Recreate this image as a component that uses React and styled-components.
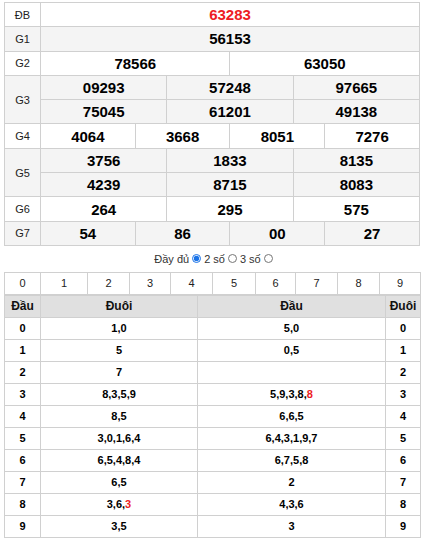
import React from "react";
import styled, { createGlobalStyle } from "styled-components";

const GlobalStyle = createGlobalStyle`
  html, body {
    margin: 0;
    padding: 0;
    background: #fff;
    font-family: "Liberation Sans", Arial, sans-serif;
    color: #000;
  }
`;

const Page = styled.div`
  width: 416px;
  padding: 2px 6px 0 4px;
`;

const PrizeTable = styled.table`
  width: 100%;
  table-layout: fixed;
  border-collapse: collapse;
  td {
    border: 1px solid #d0d0d0;
    text-align: center;
    padding: 0;
  }
`;

const PrizeRow = styled.tr`
  height: 24.3px;
  background: ${(p) => (p.$shade ? "#f4f4f4" : "#fff")};
`;

const Label = styled.td`
  font-size: 11px;
  color: #222;
`;

const Num = styled.td`
  font-size: 15px;
  font-weight: bold;
  color: ${(p) => (p.$red ? "#ed1c24" : "#000")};
`;

const Options = styled.div`
  height: 26px;
  display: flex;
  align-items: center;
  justify-content: center;
  gap: 2px;
  font-size: 11px;
  color: #333;
  padding-left: 4px;
`;

const Radio = styled.input`
  width: 9px;
  height: 9px;
  margin: 0 1px;
  accent-color: #1a73e8;
`;

const DigitTable = styled.table`
  width: 100%;
  border-collapse: collapse;
  table-layout: fixed;
  td {
    border: 1px solid #d0d0d0;
    height: 21px;
    padding: 0;
    text-align: center;
    font-size: 11px;
    color: #222;
  }
`;

const LotoTable = styled.table`
  width: 100%;
  border-collapse: collapse;
  table-layout: fixed;
  td, th {
    border: 1px solid #d0d0d0;
    padding: 0;
    text-align: center;
    font-size: 11px;
    font-weight: bold;
  }
`;

const HeadRow = styled.tr`
  height: 22px;
  background: #e0e0e0;
  th {
    font-size: 12px;
    color: #111;
  }
`;

const BodyRow = styled.tr`
  height: 22px;
`;

const Red = styled.span`
  color: #ed1c24;
`;

const top = [
  { label: "ĐB", rows: [["63283"]], red: true },
  { label: "G1", rows: [["56153"]] },
  { label: "G2", rows: [["78566", "63050"]] },
  { label: "G3", rows: [["09293", "57248", "97665"], ["75045", "61201", "49138"]] },
  { label: "G4", rows: [["4064", "3668", "8051", "7276"]] },
  { label: "G5", rows: [["3756", "1833", "8135"], ["4239", "8715", "8083"]] },
  { label: "G6", rows: [["264", "295", "575"]] },
  { label: "G7", rows: [["54", "86", "00", "27"]] },
];

const loto = [
  ["1,0", "5,0"],
  ["5", "0,5"],
  ["7", ""],
  ["8,3,5,9", <>5,9,3,8,<Red>8</Red></>],
  ["8,5", "6,6,5"],
  ["3,0,1,6,4", "6,4,3,1,9,7"],
  ["6,5,4,8,4", "6,7,5,8"],
  ["6,5", "2"],
  [<>3,6,<Red>3</Red></>, "4,3,6"],
  ["3,5", "3"],
];

const digitWidths = [36, 47, 42, 41, 42, 43, 40, 42, 42, 41];

export default function App() {
  return (
    <Page>
      <GlobalStyle />
      <PrizeTable>
        <colgroup>
          <col style={{ width: 36 }} />
          {Array.from({ length: 12 }).map((_, i) => (
            <col key={i} />
          ))}
        </colgroup>
        <tbody>
          {top.map((g, gi) =>
            g.rows.map((row, ri) => (
              <PrizeRow key={g.label + ri} $shade={gi % 2 === 1}>
                {ri === 0 && <Label rowSpan={g.rows.length}>{g.label}</Label>}
                {row.map((n, i) => (
                  <Num key={i} colSpan={12 / row.length} $red={g.red}>
                    {n}
                  </Num>
                ))}
              </PrizeRow>
            ))
          )}
        </tbody>
      </PrizeTable>

      <Options>
        <span>Đầy đủ</span>
        <Radio type="radio" name="mode" defaultChecked />
        <span>2 số</span>
        <Radio type="radio" name="mode" />
        <span>3 số</span>
        <Radio type="radio" name="mode" />
      </Options>

      <DigitTable>
        <colgroup>
          {digitWidths.map((w, i) => (
            <col key={i} style={{ width: w }} />
          ))}
        </colgroup>
        <tbody>
          <tr>
            {digitWidths.map((_, i) => (
              <td key={i}>{i}</td>
            ))}
          </tr>
        </tbody>
      </DigitTable>

      <LotoTable>
        <colgroup>
          <col style={{ width: 36 }} />
          <col style={{ width: 157 }} />
          <col style={{ width: 188 }} />
          <col style={{ width: 35 }} />
        </colgroup>
        <thead>
          <HeadRow>
            <th>Đầu</th>
            <th>Đuôi</th>
            <th>Đầu</th>
            <th>Đuôi</th>
          </HeadRow>
        </thead>
        <tbody>
          {loto.map((r, i) => (
            <BodyRow key={i}>
              <td>{i}</td>
              <td>{r[0]}</td>
              <td>{r[1]}</td>
              <td>{i}</td>
            </BodyRow>
          ))}
        </tbody>
      </LotoTable>
    </Page>
  );
}
